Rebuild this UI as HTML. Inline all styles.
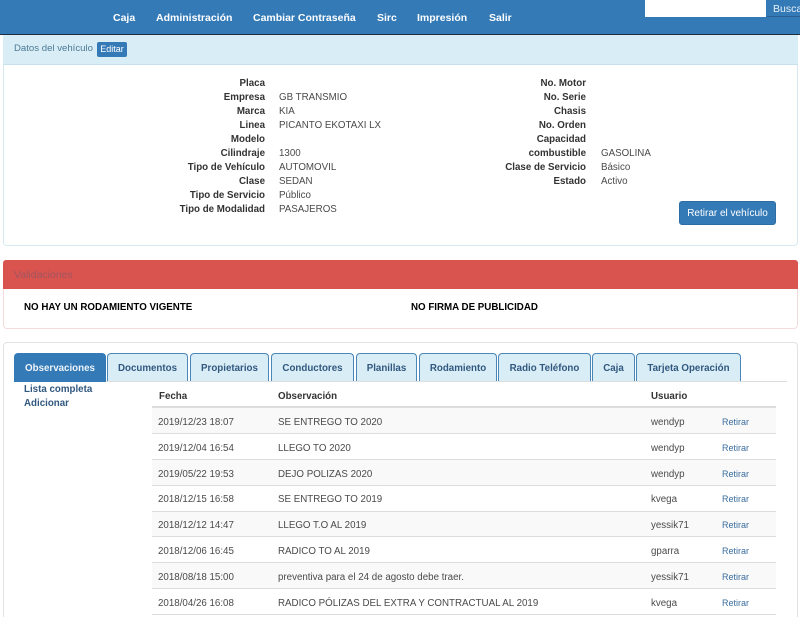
<!DOCTYPE html>
<html><head><meta charset="utf-8">
<style>
html,body{margin:0;padding:0;background:#fff;width:800px;height:617px;overflow:hidden}
#p{width:800px;height:617px;overflow:hidden;position:relative;font-family:"Liberation Sans",sans-serif;font-size:9.75px;color:#333}
.a,.l,.v{position:absolute;white-space:nowrap;line-height:14px}
.nav{position:absolute;left:0;top:0;width:800px;height:34px;background:#337ab7;border-bottom:1px solid #1c2f40}
.n{position:absolute;top:10px;color:#fff;font-weight:bold;font-size:10.5px;line-height:14px;white-space:nowrap;margin-top:0.5px}
.l{font-weight:bold;text-align:right;color:#333;width:130px;margin-top:2px}
.v{color:#4a4a4a;margin-top:2px}
.tab{position:absolute;top:353px;height:27px;background:#d9edf7;border:1px solid #4a86b8;border-bottom:none;border-radius:4px 4px 0 0;color:#31587f;font-weight:bold;font-size:9.75px;text-align:center;line-height:29px;box-sizing:content-box}
.row{position:absolute;left:152px;width:624px;border-bottom:1px solid #ddd;box-sizing:border-box}
.c{position:absolute;white-space:nowrap;line-height:14px;color:#4a4a4a;margin-top:4px}
.lnk{position:absolute;white-space:nowrap;line-height:14px;color:#3a6d9e;font-size:9px;left:722px}
</style></head><body><div id="p">
<div class="nav"></div>
<div class="n" style="left:113px">Caja</div>
<div class="n" style="left:156px">Administración</div>
<div class="n" style="left:253px">Cambiar Contraseña</div>
<div class="n" style="left:377px">Sirc</div>
<div class="n" style="left:417px">Impresión</div>
<div class="n" style="left:489px">Salir</div>
<div class="a" style="left:645px;top:0;width:121px;height:17px;background:#fff"></div>
<div class="a" style="left:767px;top:0;width:33px;height:17px;background:#337ab7;border-bottom:1px solid #2a5f8f;color:#e8f0f7;line-height:18px;font-size:10.5px;padding-left:6px;box-sizing:border-box;overflow:hidden">Buscar</div>

<div class="a" style="left:3px;top:35px;width:795px;height:211px;border:1px solid #d6e9f0;border-top:none;border-radius:0 0 4px 4px;box-sizing:border-box;background:#fff"></div>
<div class="a" style="left:3px;top:35px;width:795px;height:30px;background:#d9edf7;border-bottom:1px solid #c5e2ec;box-sizing:border-box"></div>
<div class="a" style="left:14px;top:42px;color:#4a7a94;font-size:9.6px">Datos del vehículo</div>
<div class="a" style="left:97px;top:42px;width:30px;height:15px;background:#337ab7;border-radius:2px;color:#fff;font-size:9px;line-height:15px;text-align:center">Editar</div>

<div class="l" style="left:135px;top:75px">Placa</div>
<div class="l" style="left:135px;top:89px">Empresa</div><div class="v" style="left:279px;top:89px">GB TRANSMIO</div>
<div class="l" style="left:135px;top:103px">Marca</div><div class="v" style="left:279px;top:103px">KIA</div>
<div class="l" style="left:135px;top:117px">Linea</div><div class="v" style="left:279px;top:117px">PICANTO EKOTAXI LX</div>
<div class="l" style="left:135px;top:131px">Modelo</div>
<div class="l" style="left:135px;top:145px">Cilindraje</div><div class="v" style="left:279px;top:145px">1300</div>
<div class="l" style="left:135px;top:159px">Tipo de Vehículo</div><div class="v" style="left:279px;top:159px">AUTOMOVIL</div>
<div class="l" style="left:135px;top:173px">Clase</div><div class="v" style="left:279px;top:173px">SEDAN</div>
<div class="l" style="left:135px;top:187px">Tipo de Servicio</div><div class="v" style="left:279px;top:187px">Público</div>
<div class="l" style="left:135px;top:201px">Tipo de Modalidad</div><div class="v" style="left:279px;top:201px">PASAJEROS</div>

<div class="l" style="left:456px;top:75px">No. Motor</div>
<div class="l" style="left:456px;top:89px">No. Serie</div>
<div class="l" style="left:456px;top:103px">Chasis</div>
<div class="l" style="left:456px;top:117px">No. Orden</div>
<div class="l" style="left:456px;top:131px">Capacidad</div>
<div class="l" style="left:456px;top:145px">combustible</div><div class="v" style="left:601px;top:145px">GASOLINA</div>
<div class="l" style="left:456px;top:159px">Clase de Servicio</div><div class="v" style="left:601px;top:159px">Básico</div>
<div class="l" style="left:456px;top:173px">Estado</div><div class="v" style="left:601px;top:173px">Activo</div>

<div class="a" style="left:679px;top:201px;width:97px;height:24px;background:#337ab7;border:1px solid #2e6da4;border-radius:3px;box-sizing:border-box;color:#fff;text-align:center;line-height:23px;font-size:10px">Retirar el vehículo</div>

<div class="a" style="left:3px;top:260px;width:795px;height:69px;border:1px solid #f3dcdc;border-radius:4px;box-sizing:border-box;background:#fff"></div>
<div class="a" style="left:3px;top:260px;width:795px;height:29px;background:#d9534f;border-radius:3px 3px 0 0"></div>
<div class="a" style="left:14px;top:268px;color:#a0565f;font-size:10.5px">Validaciones</div>
<div class="a" style="left:24px;top:301px;color:#000;font-weight:bold;font-size:9.75px">NO HAY UN RODAMIENTO VIGENTE</div>
<div class="a" style="left:411px;top:301px;color:#000;font-weight:bold;font-size:9.75px">NO FIRMA DE PUBLICIDAD</div>

<div class="a" style="left:3px;top:342px;width:795px;height:290px;border:1px solid #e3e3e3;border-radius:4px;box-sizing:border-box;background:#fff"></div>
<div class="a" style="left:14px;top:381px;width:773px;height:1px;background:#ddd"></div>
<div class="tab" style="left:14px;width:90px;background:#337ab7;border-color:#337ab7;color:#eef4f9;height:28px">Observaciones</div>
<div class="tab" style="left:107px;width:79px">Documentos</div>
<div class="tab" style="left:190px;width:77px">Propietarios</div>
<div class="tab" style="left:271px;width:81px">Conductores</div>
<div class="tab" style="left:356px;width:59px">Planillas</div>
<div class="tab" style="left:419px;width:76px">Rodamiento</div>
<div class="tab" style="left:498px;width:91px">Radio Teléfono</div>
<div class="tab" style="left:592px;width:41px">Caja</div>
<div class="tab" style="left:636px;width:103px">Tarjeta Operación</div>

<div class="a" style="left:24px;top:382px;color:#31587f;font-weight:bold;margin-top:1px">Lista completa</div>
<div class="a" style="left:24px;top:396px;color:#31587f;font-weight:bold;margin-top:1px">Adicionar</div>

<div class="c" style="left:159px;top:386px;color:#333;font-weight:bold">Fecha</div>
<div class="c" style="left:278px;top:386px;color:#333;font-weight:bold">Observación</div>
<div class="c" style="left:651px;top:386px;color:#333;font-weight:bold">Usuario</div>
<div class="a" style="left:152px;top:406px;width:624px;height:2px;background:#ddd"></div>

<div class="row" style="top:408px;height:26px;background:#f9f9f9"></div>
<div class="row" style="top:434px;height:26px"></div>
<div class="row" style="top:460px;height:26px;background:#f9f9f9"></div>
<div class="row" style="top:486px;height:26px"></div>
<div class="row" style="top:512px;height:25px;background:#f9f9f9"></div>
<div class="row" style="top:537px;height:26px"></div>
<div class="row" style="top:563px;height:26px;background:#f9f9f9"></div>
<div class="row" style="top:589px;height:26px"></div>

<div class="c" style="left:158px;top:412px">2019/12/23 18:07</div><div class="c" style="left:278px;top:412px">SE ENTREGO TO 2020</div><div class="c" style="left:651px;top:412px">wendyp</div><div class="lnk" style="top:415px">Retirar</div>
<div class="c" style="left:158px;top:438px">2019/12/04 16:54</div><div class="c" style="left:278px;top:438px">LLEGO TO 2020</div><div class="c" style="left:651px;top:438px">wendyp</div><div class="lnk" style="top:441px">Retirar</div>
<div class="c" style="left:158px;top:464px">2019/05/22 19:53</div><div class="c" style="left:278px;top:464px">DEJO POLIZAS 2020</div><div class="c" style="left:651px;top:464px">wendyp</div><div class="lnk" style="top:467px">Retirar</div>
<div class="c" style="left:158px;top:489px">2018/12/15 16:58</div><div class="c" style="left:278px;top:489px">SE ENTREGO TO 2019</div><div class="c" style="left:651px;top:489px">kvega</div><div class="lnk" style="top:492px">Retirar</div>
<div class="c" style="left:158px;top:515px">2018/12/12 14:47</div><div class="c" style="left:278px;top:515px">LLEGO T.O AL 2019</div><div class="c" style="left:651px;top:515px">yessik71</div><div class="lnk" style="top:518px">Retirar</div>
<div class="c" style="left:158px;top:541px">2018/12/06 16:45</div><div class="c" style="left:278px;top:541px">RADICO TO AL 2019</div><div class="c" style="left:651px;top:541px">gparra</div><div class="lnk" style="top:544px">Retirar</div>
<div class="c" style="left:158px;top:567px">2018/08/18 15:00</div><div class="c" style="left:278px;top:567px">preventiva para el 24 de agosto debe traer.</div><div class="c" style="left:651px;top:567px">yessik71</div><div class="lnk" style="top:570px">Retirar</div>
<div class="c" style="left:158px;top:593px">2018/04/26 16:08</div><div class="c" style="left:278px;top:593px">RADICO PÓLIZAS DEL EXTRA Y CONTRACTUAL AL 2019</div><div class="c" style="left:651px;top:593px">kvega</div><div class="lnk" style="top:596px">Retirar</div>
</div></body></html>
